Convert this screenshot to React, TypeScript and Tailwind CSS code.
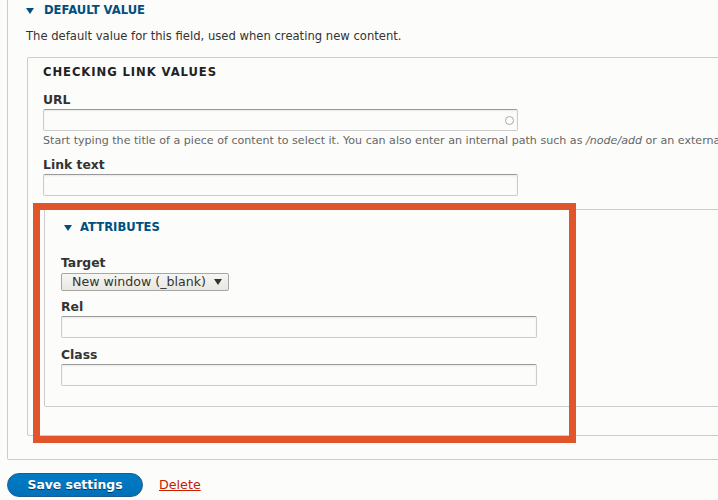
import React from 'react';

function Triangle() {
  return (
    <svg width="8" height="6" viewBox="0 0 8 6" className="shrink-0">
      <path d="M0 0 L8 0 L4 6 Z" fill="#004f80" />
    </svg>
  );
}

function TextInput({ width, autocomplete }: { width: string; autocomplete?: boolean }) {
  return (
    <div
      className={`relative h-[22px] ${width} rounded-[2px] border border-[#ccc] border-t-[#999] bg-[#fcfcfa] shadow-[inset_0_1px_2px_rgba(0,0,0,0.08)]`}
    >
      {autocomplete && (
        <span className="absolute right-[3px] top-[6px] h-[9px] w-[9px] rounded-full border border-[#aaa]" />
      )}
    </div>
  );
}

function Label({ children, className = '' }: { children: React.ReactNode; className?: string }) {
  return <div className={`h-[18px] text-[12.4px] leading-[18px] font-bold text-[#333] ${className}`}>{children}</div>;
}

export default function App() {
  return (
    <div className="relative h-[500px] w-[718px] overflow-hidden bg-[#fcfcfa] font-['DejaVu_Sans',sans-serif] text-[13px] text-[#333]">
      {/* default value details */}
      <div className="ml-[7px] w-[760px] rounded-b-[2px] border-x border-b border-[#ccc] pb-[23px] pl-[18px]">
        <div className="flex h-[20px] items-center gap-[10px] pt-[2px]">
          <Triangle />
          <span className="text-[11.6px] font-bold uppercase text-[#004f80]">Default value</span>
        </div>
        <p className="mt-[7px] whitespace-nowrap text-[11.6px] leading-[18px]">
          The default value for this field, used when creating new content.
        </p>

        {/* checking link values fieldset */}
        <div className="mt-[12px] ml-px w-[760px] rounded-[2px] border border-[#ccc] pb-[28px] pl-[15px]">
          <div className="pt-[5px] text-[11.6px] leading-[18px] font-bold uppercase tracking-[0.08em] text-[#222]">
            Checking link values
          </div>

          <Label className="mt-[10px]">URL</Label>
          <div>
            <TextInput width="w-[475px]" autocomplete />
          </div>
          <p className="mt-[2px] whitespace-nowrap text-[11.1px] leading-[16px] text-[#666]">
            Start typing the title of a piece of content to select it. You can also enter an internal path such as{' '}
            <em>/node/add</em> or an external URL such as <em>http://example.com</em>.
          </p>

          <Label className="mt-[7px]">Link text</Label>
          <div>
            <TextInput width="w-[475px]" />
          </div>

          {/* attributes details */}
          <div className="mt-[13px] ml-px w-[760px] rounded-[2px] border border-[#ccc] pb-[20px] pl-[16px]">
            <div className="mt-[9px] flex h-[18px] items-center gap-[8px] pl-[3px]">
              <Triangle />
              <span className="text-[11.6px] font-bold uppercase text-[#004f80]">Attributes</span>
            </div>

            <Label className="mt-[17px]">Target</Label>
            <div className="mt-[1px] flex h-[18px] w-[168px] items-center justify-between rounded-[2px] border border-[#a6a6a6] bg-gradient-to-b from-[#f6f6f3] to-[#e8e7e0] pl-[10px] pr-[6px] text-[12.6px] text-[#333]">
              <span>New window (_blank)</span>
              <svg width="8" height="6" viewBox="0 0 8 6">
                <path d="M0 0 L8 0 L4 6 Z" fill="#333" />
              </svg>
            </div>

            <Label className="mt-[7px]">Rel</Label>
            <div>
              <TextInput width="w-[476px]" />
            </div>

            <Label className="mt-[8px]">Class</Label>
            <div>
              <TextInput width="w-[476px]" />
            </div>
          </div>
        </div>
      </div>

      {/* actions */}
      <div className="mt-[13px] ml-[7px] flex items-center gap-[16px]">
        <button className="h-[24px] w-[136px] rounded-full border border-[#1e5c90] bg-gradient-to-b from-[#007bc6] to-[#0071b8] text-[12.4px] font-bold text-white [text-shadow:0_1px_rgba(0,0,0,0.5)]">
          Save settings
        </button>
        <a href="#" className="text-[12.7px] text-[#c72100] underline">
          Delete
        </a>
      </div>

      {/* annotation */}
      <div className="pointer-events-none absolute left-[33px] top-[203px] h-[240px] w-[543px] border-[7px] border-[#e0552a]" />
    </div>
  );
}
